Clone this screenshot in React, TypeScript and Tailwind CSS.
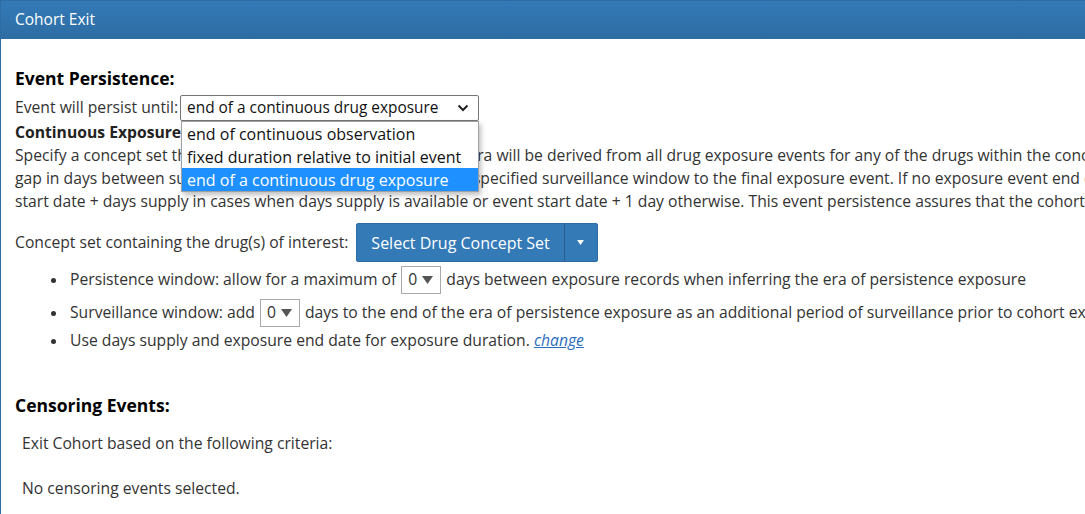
import React from "react";

const FONT = "font-['Open_Sans',_'Noto_Sans',_sans-serif]";

function Tri({ className }: { className?: string }) {
  return (
    <svg width="11" height="8" viewBox="0 0 11 8" className={className}>
      <polygon points="0,0 11,0 5.5,8" fill="currentColor" />
    </svg>
  );
}

function NumBox({ value }: { value: string }) {
  return (
    <span className="mx-[5px] inline-flex h-[28px] w-[40px] shrink-0 items-center gap-[5px] border border-[#aaaaaa] bg-white pl-[6px] text-[#333]">
      <span>{value}</span>
      <Tri className="text-[#555]" />
    </span>
  );
}

function Dot() {
  return <span className="ml-[36px] mr-[14px] h-[5px] w-[5px] shrink-0 rounded-full bg-[#333]" />;
}

export default function App() {
  return (
    <div className={`${FONT} h-[514px] w-[1085px] overflow-hidden bg-white text-[15.7px] text-[#333]`}>
      <div className="h-[514px] border-l border-t border-[#2e6da4]">
        <div className="flex h-[38px] items-center border-b border-[#2e6da4] bg-gradient-to-b from-[#337ab7] to-[#2e6da4] pl-[14px] text-[15.5px] text-white">
          Cohort Exit
        </div>
        <div className="pl-[14px]">
          <div className="mt-[27px] flex h-[24px] items-center text-[17.5px] font-bold text-black">
            Event Persistence:
          </div>
          <div className="relative mt-[5px] flex h-[26px] items-center whitespace-nowrap">
            <span>Event will persist until:</span>
            <div className="relative ml-[2px] flex h-[26px] w-[299px] shrink-0 items-center rounded-[2px] border border-[#767676] bg-white pl-[6px] text-[15.4px] text-[#111]">
              <span>end of a continuous drug exposure</span>
              <svg className="absolute right-[9px] top-[8px]" width="12" height="8" viewBox="0 0 12 8">
                <polyline points="1.5,1.5 6,6 10.5,1.5" fill="none" stroke="#222" strokeWidth="2" />
              </svg>
              <div className="absolute left-[0px] top-[25px] z-10 w-[298px] border border-[#a0a0a0] bg-white text-[16px] text-[#111] shadow-[2px_3px_5px_rgba(0,0,0,0.25)]">
                <div className="flex h-[23px] items-center pl-[5px]">end of continuous observation</div>
                <div className="flex h-[23px] items-center pl-[5px]">fixed duration relative to initial event</div>
                <div className="flex h-[23px] items-center bg-[#1e90ff] pl-[5px] text-white">end of a continuous drug exposure</div>
              </div>
            </div>
          </div>
          <div className="whitespace-nowrap leading-[23px]">
            <div className="font-bold text-[#222]">Continuous Exposure Persistence:</div>
            <div>Specify a concept set that contains one or more drugs. A drug era will be derived from all drug exposure events for any of the drugs within the concept set, using the specified persistence window as a maximum allowable</div>
            <div>gap in days between successive exposure events and adding a specified surveillance window to the final exposure event. If no exposure event end date is provided, then an exposure event end date is inferred to be event</div>
            <div>start date + days supply in cases when days supply is available or event start date + 1 day otherwise. This event persistence assures that the cohort end date will be no greater than the drug era end date.</div>
          </div>
          <div className="mt-[10px] flex h-[39px] items-center whitespace-nowrap">
            <span>Concept set containing the drug(s) of interest:</span>
            <div className="ml-[8px] flex h-[39px] shrink-0 items-stretch rounded-[2px] border border-[#2e6da4] bg-[#337ab7] text-white">
              <div className="flex items-center px-[14px] text-[16px]">Select Drug Concept Set</div>
              <div className="flex w-[33px] items-center justify-center border-l border-[#285e8e]">
                <Tri className="h-[5px] w-[9px] text-white" />
              </div>
            </div>
          </div>
          <ul className="whitespace-nowrap">
            <li className="mt-[4px] flex h-[28px] items-center">
              <Dot />
              Persistence window: allow for a maximum of
              <NumBox value="0" />
              days between exposure records when inferring the era of persistence exposure
            </li>
            <li className="mt-[5px] flex h-[28px] items-center">
              <Dot />
              Surveillance window: add
              <NumBox value="0" />
              days to the end of the era of persistence exposure as an additional period of surveillance prior to cohort exit
            </li>
            <li className="mt-[2px] flex h-[24px] items-center">
              <Dot />
              Use days supply and exposure end date for exposure duration.&nbsp;
              <a className="italic text-[#2a6ebb] underline" href="#">change</a>
            </li>
          </ul>
          <div className="mt-[40px] flex h-[24px] items-center text-[17.5px] font-bold text-black">
            Censoring Events:
          </div>
          <div className="ml-[7px] mt-[15px] flex h-[23px] items-center">Exit Cohort based on the following criteria:</div>
          <div className="ml-[7px] mt-[22px] flex h-[23px] items-center">No censoring events selected.</div>
        </div>
      </div>
    </div>
  );
}
